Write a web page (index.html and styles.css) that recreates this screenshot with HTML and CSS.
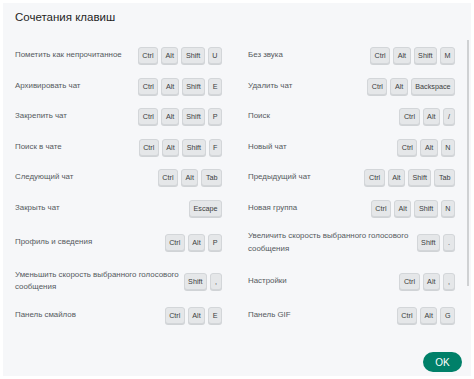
FILE: index.html
```html
<!DOCTYPE html>
<html lang="ru">

<head>
    <meta charset="UTF-8">
    <meta name="viewport" content="width=device-width, initial-scale=1.0">
    <title>Сочетания клавиш</title>
    <link rel="stylesheet" href="styles.css">
</head>

<body>
    <div class="dialog">
        <h1 class="title">Сочетания клавиш</h1>

        <div class="list">
            <div class="shortcut">
                <span class="label">Пометить как непрочитанное</span>
                <span class="keys"><kbd>Ctrl</kbd><kbd>Alt</kbd><kbd>Shift</kbd><kbd>U</kbd></span>
            </div>
            <div class="shortcut">
                <span class="label">Без звука</span>
                <span class="keys"><kbd>Ctrl</kbd><kbd>Alt</kbd><kbd>Shift</kbd><kbd>M</kbd></span>
            </div>

            <div class="shortcut">
                <span class="label">Архивировать чат</span>
                <span class="keys"><kbd>Ctrl</kbd><kbd>Alt</kbd><kbd>Shift</kbd><kbd>E</kbd></span>
            </div>
            <div class="shortcut">
                <span class="label">Удалить чат</span>
                <span class="keys"><kbd>Ctrl</kbd><kbd>Alt</kbd><kbd>Backspace</kbd></span>
            </div>

            <div class="shortcut">
                <span class="label">Закрепить чат</span>
                <span class="keys"><kbd>Ctrl</kbd><kbd>Alt</kbd><kbd>Shift</kbd><kbd>P</kbd></span>
            </div>
            <div class="shortcut">
                <span class="label">Поиск</span>
                <span class="keys"><kbd>Ctrl</kbd><kbd>Alt</kbd><kbd>/</kbd></span>
            </div>

            <div class="shortcut">
                <span class="label">Поиск в чате</span>
                <span class="keys"><kbd>Ctrl</kbd><kbd>Alt</kbd><kbd>Shift</kbd><kbd>F</kbd></span>
            </div>
            <div class="shortcut">
                <span class="label">Новый чат</span>
                <span class="keys"><kbd>Ctrl</kbd><kbd>Alt</kbd><kbd>N</kbd></span>
            </div>

            <div class="shortcut">
                <span class="label">Следующий чат</span>
                <span class="keys"><kbd>Ctrl</kbd><kbd>Alt</kbd><kbd>Tab</kbd></span>
            </div>
            <div class="shortcut">
                <span class="label">Предыдущий чат</span>
                <span class="keys"><kbd>Ctrl</kbd><kbd>Alt</kbd><kbd>Shift</kbd><kbd>Tab</kbd></span>
            </div>

            <div class="shortcut">
                <span class="label">Закрыть чат</span>
                <span class="keys"><kbd>Escape</kbd></span>
            </div>
            <div class="shortcut">
                <span class="label">Новая группа</span>
                <span class="keys"><kbd>Ctrl</kbd><kbd>Alt</kbd><kbd>Shift</kbd><kbd>N</kbd></span>
            </div>

            <div class="shortcut">
                <span class="label">Профиль и сведения</span>
                <span class="keys"><kbd>Ctrl</kbd><kbd>Alt</kbd><kbd>P</kbd></span>
            </div>
            <div class="shortcut">
                <span class="label">Увеличить скорость выбранного голосового сообщения</span>
                <span class="keys"><kbd>Shift</kbd><kbd>.</kbd></span>
            </div>

            <div class="shortcut">
                <span class="label">Уменьшить скорость выбранного голосового сообщения</span>
                <span class="keys"><kbd>Shift</kbd><kbd>,</kbd></span>
            </div>
            <div class="shortcut">
                <span class="label">Настройки</span>
                <span class="keys"><kbd>Ctrl</kbd><kbd>Alt</kbd><kbd>,</kbd></span>
            </div>

            <div class="shortcut">
                <span class="label">Панель смайлов</span>
                <span class="keys"><kbd>Ctrl</kbd><kbd>Alt</kbd><kbd>E</kbd></span>
            </div>
            <div class="shortcut">
                <span class="label">Панель GIF</span>
                <span class="keys"><kbd>Ctrl</kbd><kbd>Alt</kbd><kbd>G</kbd></span>
            </div>
        </div>

        <div class="scrollbar"></div>

        <div class="footer">
            <button type="button" class="ok-btn">OK</button>
        </div>
    </div>
</body>

</html>
```

FILE: styles.css
```css
* {
    box-sizing: border-box;
}

body {
    margin: 0;
    background-color: #ffffff;
    font-family: "Liberation Sans", Arial, sans-serif;
}

.dialog {
    position: relative;
    margin: 3px;
    height: 373px;
    padding: 4px 16px 0 12px;
    background-color: #f6f7f9;
    display: flex;
    flex-direction: column;
}

.title {
    margin: 0;
    font-size: 11.5px;
    line-height: 20px;
    font-weight: normal;
    color: #1f1f1f;
}

.list {
    flex: 1;
    margin-top: 20px;
    display: grid;
    grid-template-columns: 1fr 1fr;
    column-gap: 26px;
    row-gap: 13.5px;
    align-content: start;
}

.shortcut {
    display: flex;
    align-items: center;
    justify-content: space-between;
    min-height: 17px;
}

.label {
    font-size: 7.9px;
    line-height: 12.5px;
    color: #555a5e;
    padding-right: 4px;
}

.keys {
    display: flex;
    gap: 3px;
    flex-shrink: 0;
}

kbd {
    display: inline-block;
    height: 17px;
    min-width: 12px;
    padding: 0 3.5px;
    font-family: "Liberation Sans", Arial, sans-serif;
    font-size: 7.2px;
    line-height: 15px;
    text-align: center;
    color: #3a3d40;
    background-color: #e5e7e9;
    border: 1px solid #d3d6d9;
    border-radius: 3px;
    box-shadow: 0 1px 0 #d0d3d6;
}

.scrollbar {
    position: absolute;
    right: 2px;
    top: 37px;
    width: 2px;
    height: 246px;
    background-color: #cfd1d3;
}

.footer {
    display: flex;
    justify-content: flex-end;
    margin-right: -7px;
    padding-bottom: 4px;
}

.ok-btn {
    width: 39px;
    height: 20px;
    border: none;
    border-radius: 10px;
    background-color: #008069;
    color: #ffffff;
    font-family: "Liberation Sans", Arial, sans-serif;
    font-size: 10px;
    cursor: pointer;
}
```
